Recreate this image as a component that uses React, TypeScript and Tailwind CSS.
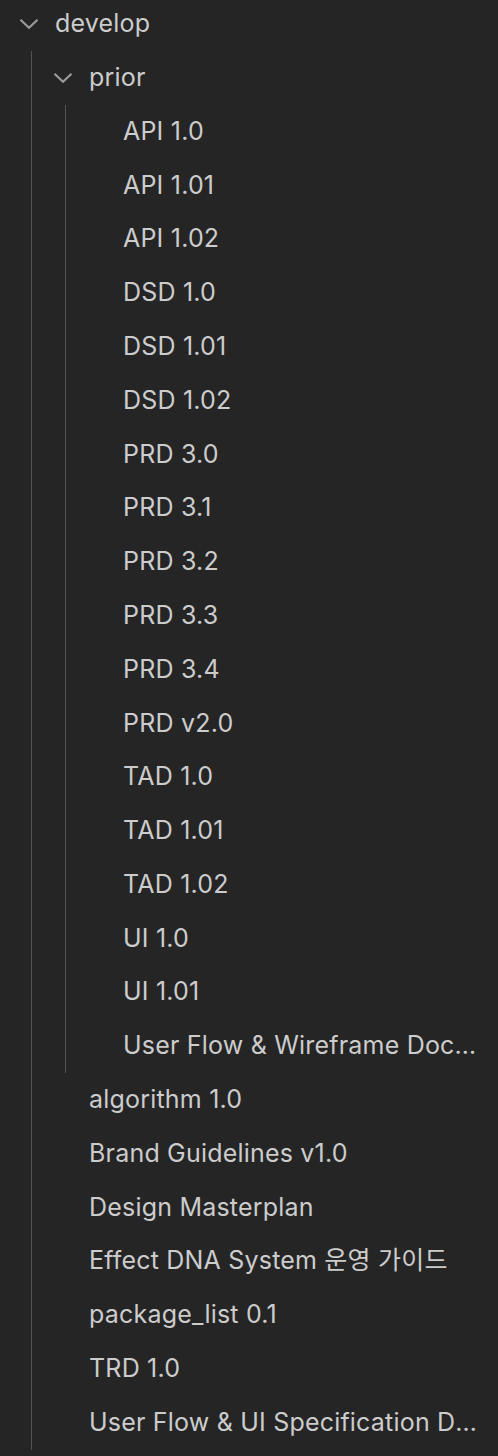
import React from "react"

type TreeNode = {
  name: string
  children?: TreeNode[]
}

const tree: TreeNode = {
  name: "develop",
  children: [
    {
      name: "prior",
      children: [
        "API 1.0",
        "API 1.01",
        "API 1.02",
        "DSD 1.0",
        "DSD 1.01",
        "DSD 1.02",
        "PRD 3.0",
        "PRD 3.1",
        "PRD 3.2",
        "PRD 3.3",
        "PRD 3.4",
        "PRD v2.0",
        "TAD 1.0",
        "TAD 1.01",
        "TAD 1.02",
        "UI 1.0",
        "UI 1.01",
        "User Flow & Wireframe Documentation",
      ].map((name) => ({ name })),
    },
    { name: "algorithm 1.0" },
    { name: "Brand Guidelines v1.0" },
    { name: "Design Masterplan" },
    { name: "Effect DNA System 운영 가이드" },
    { name: "package_list 0.1" },
    { name: "TRD 1.0" },
    { name: "User Flow & UI Specification Document" },
  ],
}

function Chevron() {
  return (
    <svg width="20" height="12" viewBox="0 0 20 12" fill="none" className="shrink-0">
      <path d="M1.5 1.8 L10 9.8 L18.5 1.8" stroke="#9a9a9a" strokeWidth="2.2" strokeLinejoin="miter" />
    </svg>
  )
}

function Node({ node }: { node: TreeNode }) {
  const isFolder = !!node.children

  return (
    <div>
      <div className={`flex h-[53.8px] items-center pr-[20px] ${isFolder ? "pl-[19px]" : "pl-[55px]"}`}>
        {isFolder && (
          <div className="flex w-[36px] shrink-0 items-center">
            <Chevron />
          </div>
        )}
        <span className="truncate">{node.name}</span>
      </div>

      {/* indent guide for expanded folders */}
      {isFolder && (
        <div className="ml-[31px] border-l border-[#525252] pl-[2px]">
          {node.children!.map((child) => (
            <Node key={child.name} node={child} />
          ))}
        </div>
      )}
    </div>
  )
}

export default function App() {
  return (
    <div
      className="h-[1456px] w-[498px] overflow-hidden bg-[#252526] text-[25px] tracking-[0.2px] text-[#cccccc]"
      style={{ fontFamily: 'Inter, "Noto Sans CJK KR", sans-serif' }}
    >
      <div className="-mt-[3px]">
        <Node node={tree} />
      </div>
    </div>
  )
}
